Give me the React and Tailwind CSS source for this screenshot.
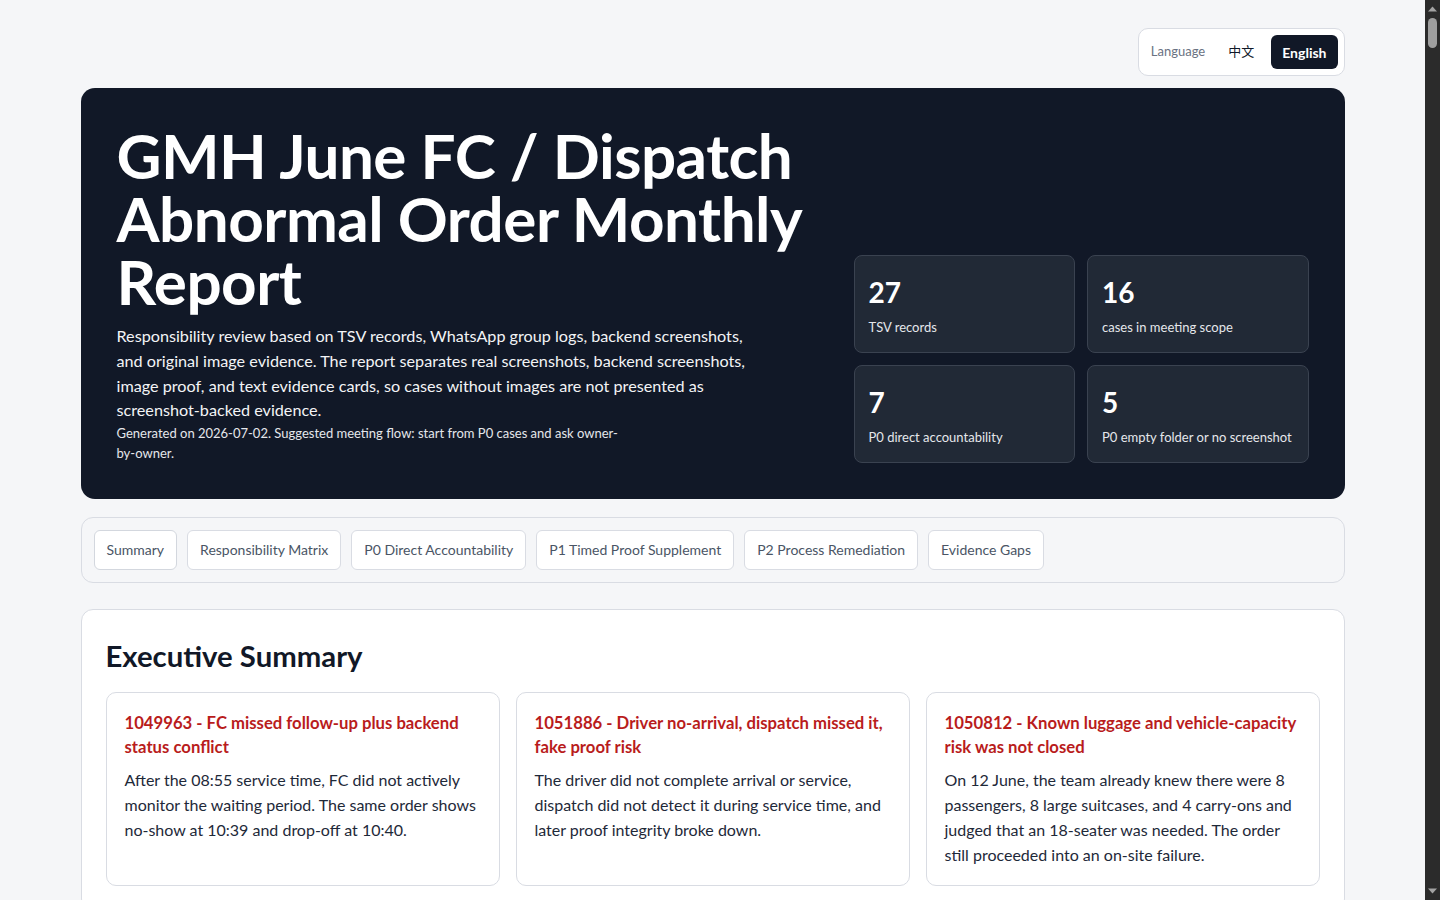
import React, { useState } from 'react';

const stats = [
    { value: '27', label: 'TSV records' },
    { value: '16', label: 'cases in meeting scope' },
    { value: '7', label: 'P0 direct accountability' },
    { value: '5', label: 'P0 empty folder or no screenshot' },
];

const tabs = [
    'Summary',
    'Responsibility Matrix',
    'P0 Direct Accountability',
    'P1 Timed Proof Supplement',
    'P2 Process Remediation',
    'Evidence Gaps',
];

const highlights = [
    {
        title: '1049963 - FC missed follow-up plus backend status conflict',
        body: 'After the 08:55 service time, FC did not actively monitor the waiting period. The same order shows no-show at 10:39 and drop-off at 10:40.',
    },
    {
        title: '1051886 - Driver no-arrival, dispatch missed it, fake proof risk',
        body: 'The driver did not complete arrival or service, dispatch did not detect it during service time, and later proof integrity broke down.',
    },
    {
        title: '1050812 - Known luggage and vehicle-capacity risk was not closed',
        body: 'On 12 June, the team already knew there were 8 passengers, 8 large suitcases, and 4 carry-ons and judged that an 18-seater was needed. The order still proceeded into an on-site failure.',
    },
];

const matrixRows = [
    ['FC', '1049963, 1050233', 'Missed follow-up during waiting period', 'P0'],
    ['Dispatch', '1051886, 1050812', 'No monitoring of arrival status', 'P0'],
    ['Driver', '1051886', 'Proof integrity and no-arrival', 'P0'],
    ['Backend', '1049963', 'Status conflict between no-show and drop-off', 'P1'],
];

const laterSections = [
    { title: 'P0 Direct Accountability', text: 'Cases where the responsible owner is directly accountable for the failure.' },
    { title: 'P1 Timed Proof Supplement', text: 'Cases that need timed proof to be supplemented before a final decision.' },
    { title: 'P2 Process Remediation', text: 'Process gaps to fix so the same failure does not repeat.' },
    { title: 'Evidence Gaps', text: 'Folders that are empty or contain no screenshot evidence.' },
];

function LanguageToggle() {
    const [lang, setLang] = useState('en');
    return (
        <div className="flex items-center gap-[6px] p-[6px] bg-white border border-[#d9dce3] rounded-[10px]">
            <span className="px-[6px] text-[13px] text-gray-500">Language</span>
            <button
                onClick={() => setLang('zh')}
                className={`h-[34px] px-[11px] rounded-md text-[13px] ${lang === 'zh' ? 'bg-[#111827] text-white font-bold' : 'text-gray-900'}`}
            >
                中文
            </button>
            <button
                onClick={() => setLang('en')}
                className={`h-[34px] px-[11px] rounded-md text-[14px] ${lang === 'en' ? 'bg-[#111827] text-white font-bold' : 'text-gray-900'}`}
            >
                English
            </button>
        </div>
    );
}

// window scrollbar as it appears in the reference
function Scrollbar() {
    return (
        <div className="w-[15px] shrink-0 bg-[#2b2b2b] flex flex-col items-center">
            <svg width="15" height="15" viewBox="0 0 15 15" className="shrink-0">
                <path d="M3 11.5 L7.5 6.5 L12 11.5 Z" fill="#a3a3a3" />
            </svg>
            <div className="mt-[3px] w-[9px] h-[30px] rounded-full bg-[#9f9f9f]" />
            <div className="flex-1" />
            <svg width="15" height="15" viewBox="0 0 15 15" className="shrink-0">
                <path d="M3 3.5 L12 3.5 L7.5 8.5 Z" fill="#a3a3a3" />
            </svg>
        </div>
    );
}

export default function App() {
    const [active, setActive] = useState('Summary');

    return (
        <div className="flex h-screen overflow-hidden bg-[#f5f6f8] text-gray-800 font-['Lato','Noto_Sans_CJK_SC',sans-serif]">
            <div className="flex-1 overflow-y-auto [scrollbar-width:none]">
                <div className="max-w-[1264px] mx-auto pt-7 pb-16">
                    <div className="flex justify-end mb-3">
                        <LanguageToggle />
                    </div>

                    <header className="grid grid-cols-[1fr_455px] gap-8 p-9 bg-[#111827] rounded-[14px] text-white">
                        <div>
                            <h1 className="text-[62px] leading-[63px] font-bold tracking-[-0.5px] mb-[11px]">
                                GMH June FC / Dispatch Abnormal Order Monthly Report
                            </h1>
                            <p className="max-w-[640px] text-[16.2px] leading-[24.75px] text-gray-100">
                                Responsibility review based on TSV records, WhatsApp group logs, backend screenshots, and original image evidence. The report separates real screenshots, backend screenshots, image proof, and text evidence cards, so cases without images are not presented as screenshot-backed evidence.
                            </p>
                            <p className="max-w-[512px] text-[13px] leading-[20px] text-gray-200">
                                Generated on 2026-07-02. Suggested meeting flow: start from P0 cases and ask owner-by-owner.
                            </p>
                        </div>
                        <div className="self-end grid grid-cols-2 gap-3">
                            {stats.map((s) => (
                                <div key={s.label} className="bg-[#212936] border border-[#3a4250] rounded-lg px-[14px] pt-[18px] pb-4">
                                    <div className="text-[28px] leading-9 font-bold">{s.value}</div>
                                    <div className="mt-2 text-[13px] leading-[18px] text-gray-200">{s.label}</div>
                                </div>
                            ))}
                        </div>
                    </header>

                    <nav className="mt-[18px] flex flex-wrap gap-[10px] p-3 border border-[#d9dce3] rounded-xl">
                        {tabs.map((t) => (
                            <button
                                key={t}
                                onClick={() => setActive(t)}
                                className={`px-3 py-[9px] text-[14px] leading-5 bg-white border rounded-md text-gray-600 ${active === t ? 'border-[#d3d7de]' : 'border-[#d9dce3]'}`}
                            >
                                {t}
                            </button>
                        ))}
                    </nav>

                    <section className="mt-[26px] bg-white border border-[#d9dce3] rounded-xl px-6 pt-[28px] pb-6">
                        <h2 className="text-[29.3px] leading-[1.25] font-bold text-[#111827] mb-[17px]">Executive Summary</h2>
                        <div className="grid grid-cols-3 gap-4">
                            {highlights.map((h) => (
                                <div key={h.title} className="border border-[#d9dce3] rounded-[10px] p-[18px]">
                                    <h3 className="text-[16.7px] leading-6 font-bold text-[#b91c1c]">{h.title}</h3>
                                    <p className="mt-2 text-[16px] leading-[25px] text-gray-800">{h.body}</p>
                                </div>
                            ))}
                        </div>
                    </section>

                    <section className="mt-[26px] bg-white border border-[#d9dce3] rounded-xl p-6">
                        <h2 className="text-[29.3px] leading-[1.25] font-bold text-[#111827] mb-[18px]">Responsibility Matrix</h2>
                        <table className="w-full text-[15px] text-left">
                            <thead>
                                <tr className="border-b border-[#d9dce3] text-gray-500">
                                    <th className="py-3 pr-4 font-bold">Owner</th>
                                    <th className="py-3 pr-4 font-bold">Orders</th>
                                    <th className="py-3 pr-4 font-bold">Issue</th>
                                    <th className="py-3 font-bold">Priority</th>
                                </tr>
                            </thead>
                            <tbody>
                                {matrixRows.map((r) => (
                                    <tr key={r[0]} className="border-b border-[#eceef2]">
                                        <td className="py-3 pr-4 font-bold">{r[0]}</td>
                                        <td className="py-3 pr-4">{r[1]}</td>
                                        <td className="py-3 pr-4">{r[2]}</td>
                                        <td className="py-3 text-[#b91c1c] font-bold">{r[3]}</td>
                                    </tr>
                                ))}
                            </tbody>
                        </table>
                    </section>

                    {laterSections.map((s) => (
                        <section key={s.title} className="mt-[26px] bg-white border border-[#d9dce3] rounded-xl p-6 min-h-[1200px]">
                            <h2 className="text-[29.3px] leading-[1.25] font-bold text-[#111827] mb-[18px]">{s.title}</h2>
                            <p className="text-[16px] leading-[25px]">{s.text}</p>
                        </section>
                    ))}
                </div>
            </div>
            <Scrollbar />
        </div>
    );
}
